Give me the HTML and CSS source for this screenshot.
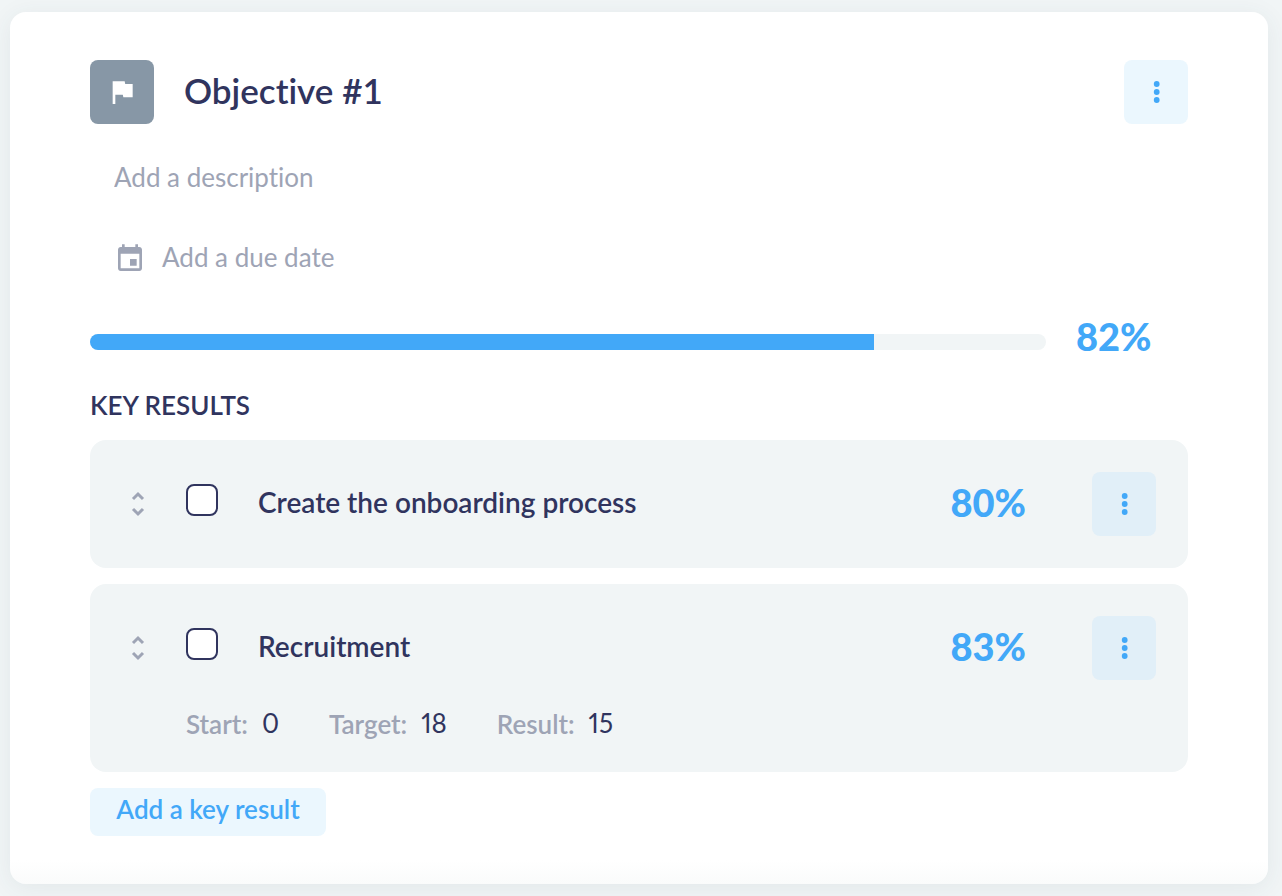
FILE: index.html
```html
<!DOCTYPE html>
<html lang="en">
<head>
    <meta charset="UTF-8">
    <meta name="viewport" content="width=device-width, initial-scale=1.0">
    <title>Objective</title>
    <link rel="stylesheet" href="styles.css">
</head>
<body>
    <main class="objective">
        <header class="objective-header">
            <div class="objective-icon">
                <svg width="32" height="32" viewBox="0 0 24 24" fill="#fff"><path d="M14.4 6L14 4H5v17h2v-7h5.6l.4 2h7V6z"/></svg>
            </div>
            <h1 class="objective-title">Objective #1</h1>
            <button class="menu-btn" type="button" aria-label="Objective menu">
                <svg width="32" height="32" viewBox="0 0 32 32" fill="currentColor"><circle cx="16.7" cy="8" r="2.9"/><circle cx="16.7" cy="16" r="2.9"/><circle cx="16.7" cy="24" r="2.9"/></svg>
            </button>
        </header>

        <input class="description" type="text" placeholder="Add a description" aria-label="Description">

        <button class="due-date" type="button">
            <svg width="32" height="32" viewBox="0 -1.5 24 24" fill="currentColor"><path d="M17 12h-5v5h5v-5zM16 1v2H8V1H6v2H5c-1.11 0-1.99.9-1.99 2L3 19c0 1.1.89 2 2 2h14c1.1 0 2-.9 2-2V5c0-1.1-.9-2-2-2h-1V1h-2zm3 18H5V8h14v11z"/></svg>
            Add a due date
        </button>

        <div class="progress">
            <div class="progress-track">
                <div class="progress-bar" style="width: 82%"></div>
            </div>
            <div class="progress-value percent">82%</div>
        </div>

        <h2 class="section-title">Key results</h2>
        <ul class="results">
            <li class="result">
                <div class="result-row">
                    <svg class="drag" width="32" height="32" viewBox="0 0 32 32"><path d="M11 11l5-5 5 5M11 21l5 5 5-5"/></svg>
                    <input class="result-check" type="checkbox" id="result-1">
                    <label class="result-name" for="result-1">Create the onboarding process</label>
                    <span class="percent">80%</span>
                    <button class="menu-btn" type="button" aria-label="Key result menu">
                        <svg width="32" height="32" viewBox="0 0 32 32" fill="currentColor"><circle cx="16.7" cy="8" r="2.9"/><circle cx="16.7" cy="16" r="2.9"/><circle cx="16.7" cy="24" r="2.9"/></svg>
                    </button>
                </div>
            </li>
            <li class="result">
                <div class="result-row">
                    <svg class="drag" width="32" height="32" viewBox="0 0 32 32"><path d="M11 11l5-5 5 5M11 21l5 5 5-5"/></svg>
                    <input class="result-check" type="checkbox" id="result-2">
                    <label class="result-name" for="result-2">Recruitment</label>
                    <span class="percent">83%</span>
                    <button class="menu-btn" type="button" aria-label="Key result menu">
                        <svg width="32" height="32" viewBox="0 0 32 32" fill="currentColor"><circle cx="16.7" cy="8" r="2.9"/><circle cx="16.7" cy="16" r="2.9"/><circle cx="16.7" cy="24" r="2.9"/></svg>
                    </button>
                </div>
                <dl class="stats">
                    <div class="stat"><dt>Start:</dt><dd>0</dd></div>
                    <div class="stat"><dt>Target:</dt><dd>18</dd></div>
                    <div class="stat"><dt>Result:</dt><dd>15</dd></div>
                </dl>
            </li>
        </ul>

        <button class="add-btn" type="button">Add a key result</button>
    </main>
</body>
</html>
```
FILE: styles.css
```css
:root {
    --primary: #42a8f8;
    --dark: #30345e;
    --muted: #9ea4b5;
    --light: #f1f5f6;
}

* {
    margin: 0;
    padding: 0;
    box-sizing: border-box;
}

body {
    background: #f1f5f6;
    padding: 12px 14px 12px 10px;
    font-family: Lato, sans-serif;
    font-size: 26px;
    line-height: 32px;
    font-variant-ligatures: none;
    color: var(--dark);
}

button,
input {
    font: inherit;
    font-variant-ligatures: none;
    border: none;
    background: none;
}

button {
    cursor: pointer;
}

svg {
    display: block;
    flex-shrink: 0;
}

.objective {
    display: flex;
    flex-direction: column;
    padding: 48px 80px;
    border-radius: 16px;
    background: linear-gradient(to top, #fafbfb, #fff 24px);
    box-shadow: 0 4px 24px rgba(48, 80, 94, 0.08);
}

.objective-header {
    display: flex;
    align-items: center;
}

.objective-icon {
    display: flex;
    align-items: center;
    justify-content: center;
    width: 64px;
    height: 64px;
    margin-right: 30px;
    border-radius: 8px;
    background: #8797a6;
}

.objective-title {
    flex: 1;
    padding-bottom: 4px;
    font-size: 35px;
    line-height: 44px;
    font-weight: 600;
}

.menu-btn {
    display: flex;
    align-items: center;
    justify-content: center;
    width: 64px;
    height: 64px;
    border-radius: 8px;
    background: #ebf7fe;
    color: var(--primary);
}

.description {
    height: 48px;
    margin-top: 30px;
    padding: 0 24px 2px;
}

.description::placeholder {
    color: var(--muted);
    opacity: 1;
}

.due-date {
    display: flex;
    align-items: center;
    align-self: flex-start;
    gap: 16px;
    height: 48px;
    margin-top: 32px;
    padding: 0 24px 2px;
    color: var(--muted);
}

.progress {
    display: flex;
    align-items: center;
    gap: 30px;
    margin-top: 40px;
}

.progress-track {
    flex: 1;
    height: 16px;
    border-radius: 8px;
    background: var(--light);
    overflow: hidden;
}

.progress-bar {
    height: 100%;
    background: var(--primary);
}

.percent {
    padding-bottom: 4px;
    font-size: 38px;
    line-height: 40px;
    font-weight: 900;
    color: var(--primary);
}

.progress-value {
    width: 112px;
    line-height: 28px;
    padding-bottom: 12px;
}

.section-title {
    margin-top: 27px;
    font-size: 26px;
    font-weight: 600;
    text-transform: uppercase;
}

.results {
    display: flex;
    flex-direction: column;
    gap: 16px;
    margin-top: 19px;
    list-style: none;
}

.result {
    padding: 32px;
    border-radius: 16px;
    background: var(--light);
}

.result-row {
    display: flex;
    align-items: center;
}

.result .menu-btn {
    margin-left: 66px;
    background: #e1eff8;
}

.drag {
    fill: none;
    stroke: var(--muted);
    stroke-width: 3;
}

.result-check {
    appearance: none;
    align-self: flex-start;
    width: 32px;
    height: 32px;
    margin: 12px 40px 0 32px;
    border: 2px solid var(--dark);
    border-radius: 8px;
    background: #fff;
}

.result-check:checked {
    background: var(--dark);
}

.result-name {
    flex: 1;
    padding-bottom: 4px;
    font-size: 28px;
    font-weight: 600;
}

.stats {
    display: flex;
    gap: 50px;
    margin-top: 28px;
    padding-left: 64px;
}

.stat {
    display: flex;
    gap: 14px;
}

.stat dt {
    font-weight: 600;
    color: var(--muted);
}

.stat dd {
    line-height: 30px;
    font-variant-numeric: proportional-nums;
}

.add-btn {
    align-self: flex-start;
    min-width: 236px;
    height: 48px;
    margin-top: 16px;
    padding: 0 24px 6px;
    border-radius: 8px;
    background: #ebf7fe;
    color: var(--primary);
    font-weight: 600;
}
```
